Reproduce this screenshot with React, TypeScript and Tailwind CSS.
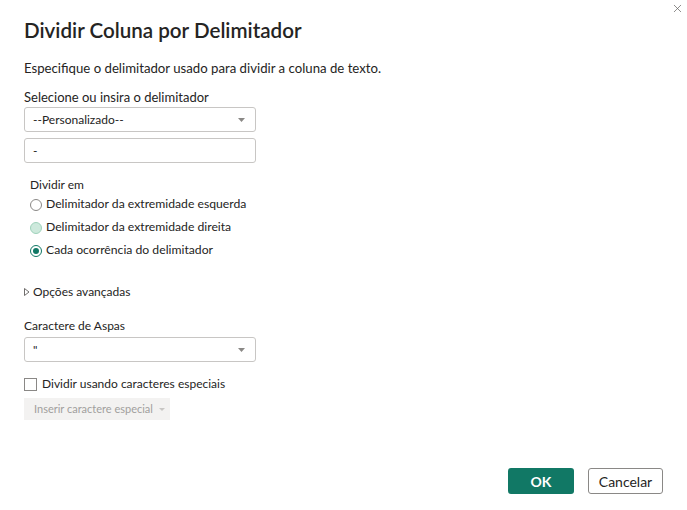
import { X } from "lucide-react";

const font = { fontFamily: '"Segoe UI", Lato, sans-serif' };

function Caret() {
  return (
    <svg width="7" height="4" viewBox="0 0 7 4" className="text-[#8a8886]">
      <path d="M0 0 L7 0 L3.5 4 Z" fill="currentColor" />
    </svg>
  );
}

function SelectBox({ value }: { value: string }) {
  return (
    <div className="flex h-[25px] w-[232px] items-center justify-between rounded-[3px] border border-[#c8c6c4] pl-[8px] pr-[10px] text-[12px] text-[#252423]">
      <span>{value}</span>
      <Caret />
    </div>
  );
}

function Radio({ label, state }: { label: string; state: "off" | "hover" | "on" }) {
  return (
    <div className="flex h-[23px] items-center gap-[4px] pl-[6px] text-[12.2px] text-[#252423]">
      {state === "on" ? (
        <span className="flex h-[12px] w-[12px] items-center justify-center rounded-full border border-[#117865]">
          <span className="h-[6px] w-[6px] rounded-full bg-[#117865]" />
        </span>
      ) : state === "hover" ? (
        <span className="h-[12px] w-[12px] rounded-full border border-[#9fd2bb] bg-[#cde9dc]" />
      ) : (
        <span className="h-[12px] w-[12px] rounded-full border border-[#8a8886]" />
      )}
      <span>{label}</span>
    </div>
  );
}

export default function App() {
  return (
    <div
      style={font}
      className="relative flex h-[510px] w-[687px] flex-col bg-white px-[24px] text-[#252423]"
    >
      <button className="absolute right-[3px] top-[2px] text-[#605e5c]">
        <X size={13} strokeWidth={1.3} />
      </button>

      <h1 className="mt-[16px] text-[20.6px] font-semibold leading-[28px]">
        Dividir Coluna por Delimitador
      </h1>

      <p className="mt-[14px] text-[13.2px] leading-[20px]">
        Especifique o delimitador usado para dividir a coluna de texto.
      </p>

      <label className="mt-[11px] text-[13px] leading-[16px]">
        Selecione ou insira o delimitador
      </label>
      <div className="mt-[2px]">
        <SelectBox value="--Personalizado--" />
      </div>
      <div className="mt-[6px] flex h-[25px] w-[232px] items-center rounded-[3px] border border-[#c8c6c4] pl-[8px] text-[12px]">
        -
      </div>

      <div className="mt-[14px] pl-[6px] text-[12px] leading-[16px]">Dividir em</div>
      <div className="flex flex-col">
        <Radio label="Delimitador da extremidade esquerda" state="off" />
        <Radio label="Delimitador da extremidade direita" state="hover" />
        <Radio label="Cada ocorrência do delimitador" state="on" />
      </div>

      <div className="mt-[22px] flex items-center gap-[3px] text-[12px] leading-[16px]">
        <svg width="6" height="8" viewBox="0 0 6 8">
          <path d="M0.5 0.5 L5 4 L0.5 7.5 Z" fill="none" stroke="#605e5c" strokeWidth="0.9" />
        </svg>
        <span>Opções avançadas</span>
      </div>

      <label className="mt-[18px] text-[12px] leading-[16px]">Caractere de Aspas</label>
      <div className="mt-[3px]">
        <SelectBox value={'"'} />
      </div>

      <div className="mt-[14px] flex h-[16px] items-center gap-[5px] text-[12px]">
        <span className="h-[13px] w-[13px] border border-[#8a8886]" />
        <span>Dividir usando caracteres especiais</span>
      </div>

      <div className="mt-[6px] flex h-[22px] w-[146px] items-center gap-[6px] whitespace-nowrap bg-[#f3f2f1] pl-[10px] text-[11px] text-[#a19f9d]">
        <span>Inserir caractere especial</span>
        <svg width="6" height="3" viewBox="0 0 6 3">
          <path d="M0 0 L6 0 L3 3 Z" fill="#c8c6c4" />
        </svg>
      </div>

      <div className="mt-auto mb-[16px] flex justify-end gap-[14px]">
        <button className="h-[26px] w-[66px] rounded-[3px] bg-[#117865] text-[14px] font-bold text-white">
          OK
        </button>
        <button className="h-[26px] w-[75px] rounded-[3px] border border-[#8a8886] text-[14px] text-[#252423]">
          Cancelar
        </button>
      </div>
    </div>
  );
}
